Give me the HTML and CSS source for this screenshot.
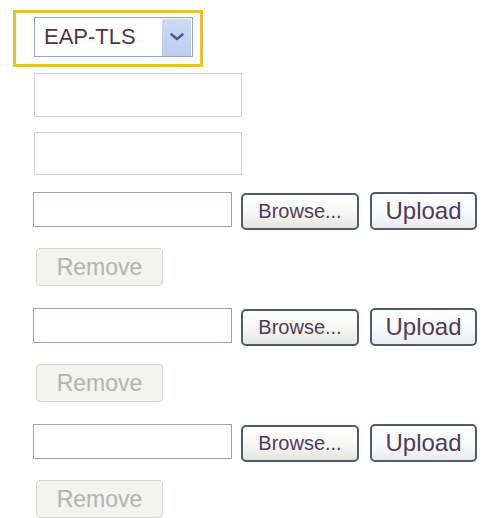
FILE: index.html
```html
<!DOCTYPE html>
<html>
<head>
<meta charset="utf-8">
<link rel="stylesheet" href="styles.css">
</head>
<body>
<div class="page">
  <div class="highlight">
    <div class="select">
      <span class="select-text">EAP-TLS</span>
      <span class="select-btn">
        <svg width="14" height="8" viewBox="0 0 14 8"><path d="M1.5 1.5 L7 6 L12.5 1.5" fill="none" stroke="#4d5b82" stroke-width="2.6" stroke-linecap="round" stroke-linejoin="round"/></svg>
      </span>
    </div>
  </div>
  <div class="fields">
    <input class="text-input first" type="text">
    <input class="text-input second" type="text">

    <div class="file-row first-row">
      <div class="file-input"></div>
      <button class="btn browse">Browse...</button>
      <button class="btn upload">Upload</button>
    </div>
    <button class="remove" disabled>Remove</button>

    <div class="file-row">
      <div class="file-input"></div>
      <button class="btn browse">Browse...</button>
      <button class="btn upload">Upload</button>
    </div>
    <button class="remove" disabled>Remove</button>

    <div class="file-row">
      <div class="file-input"></div>
      <button class="btn browse">Browse...</button>
      <button class="btn upload">Upload</button>
    </div>
    <button class="remove" disabled>Remove</button>
  </div>
</div>
</body>
</html>
```

FILE: styles.css
```css
html, body {
  margin: 0;
  padding: 0;
  background: #ffffff;
}
body {
  font-family: "Liberation Sans", Arial, sans-serif;
  color: #4b3852;
  width: 487px;
  height: 518px;
  overflow: hidden;
}
.page {
  padding: 10px 0 0 13px;
  display: flex;
  flex-direction: column;
  align-items: flex-start;
}
.highlight {
  box-sizing: border-box;
  width: 190px;
  height: 57px;
  border: 3px solid #e8c233;
  padding: 4px 7px 7px 18px;
}
.select {
  box-sizing: border-box;
  width: 159px;
  height: 40px;
  border: 1px solid #95a6ba;
  display: flex;
  align-items: center;
  background: #fff;
}
.select-text {
  padding-left: 9px;
  font-size: 22px;
  color: #4e3650;
  flex: 1;
}
.select-btn {
  width: 29px;
  height: 37px;
  margin-right: 1px;
  background: linear-gradient(#cddaf3, #bccdee);
  display: flex;
  align-items: center;
  justify-content: center;
}
.fields {
  margin-left: 21px;
  display: flex;
  flex-direction: column;
  align-items: flex-start;
}
.text-input {
  box-sizing: border-box;
  width: 208px;
  height: 44px;
  border: 1px solid #d2d2d2;
  border-radius: 0;
  background: #fff;
  padding: 0;
  outline: none;
  margin: 0;
}
.text-input.first {
  margin-top: 6px;
}
.text-input.second {
  margin-top: 15px;
  height: 43px;
}
.file-row {
  display: flex;
  align-items: flex-start;
  margin-top: 22px;
}
.file-row.first-row {
  margin-top: 17px;
}
.file-input {
  box-sizing: border-box;
  width: 199px;
  height: 35px;
  margin-left: -1px;
  border: 1px solid #9aa5b1;
  background: #fff;
}
.btn {
  box-sizing: border-box;
  font-family: "Liberation Sans", Arial, sans-serif;
  color: #4f3a58;
  border: 2px solid #4f5b6a;
  border-radius: 5px;
  background: linear-gradient(#ffffff 0%, #f6f6f3 55%, #e4e4de 100%);
  padding: 0;
  margin: 0;
  display: flex;
  align-items: center;
  justify-content: center;
}
.browse {
  width: 118px;
  height: 37px;
  margin-left: 9px;
  margin-top: 1px;
  font-size: 20px;
}
.upload {
  width: 107px;
  height: 38px;
  margin-left: 11px;
  font-size: 24px;
  background: linear-gradient(#ffffff 0%, #f8f9fb 60%, #e8eaee 100%);
}
.remove {
  box-sizing: border-box;
  width: 127px;
  height: 38px;
  margin-top: 18px;
  margin-left: 2px;
  padding: 0;
  border: 1px solid #d6d6ce;
  border-radius: 4px;
  background: #f3f3ef;
  color: #b2b2ae;
  font-family: "Liberation Sans", Arial, sans-serif;
  font-size: 23px;
  display: flex;
  align-items: center;
  justify-content: center;
}
```
